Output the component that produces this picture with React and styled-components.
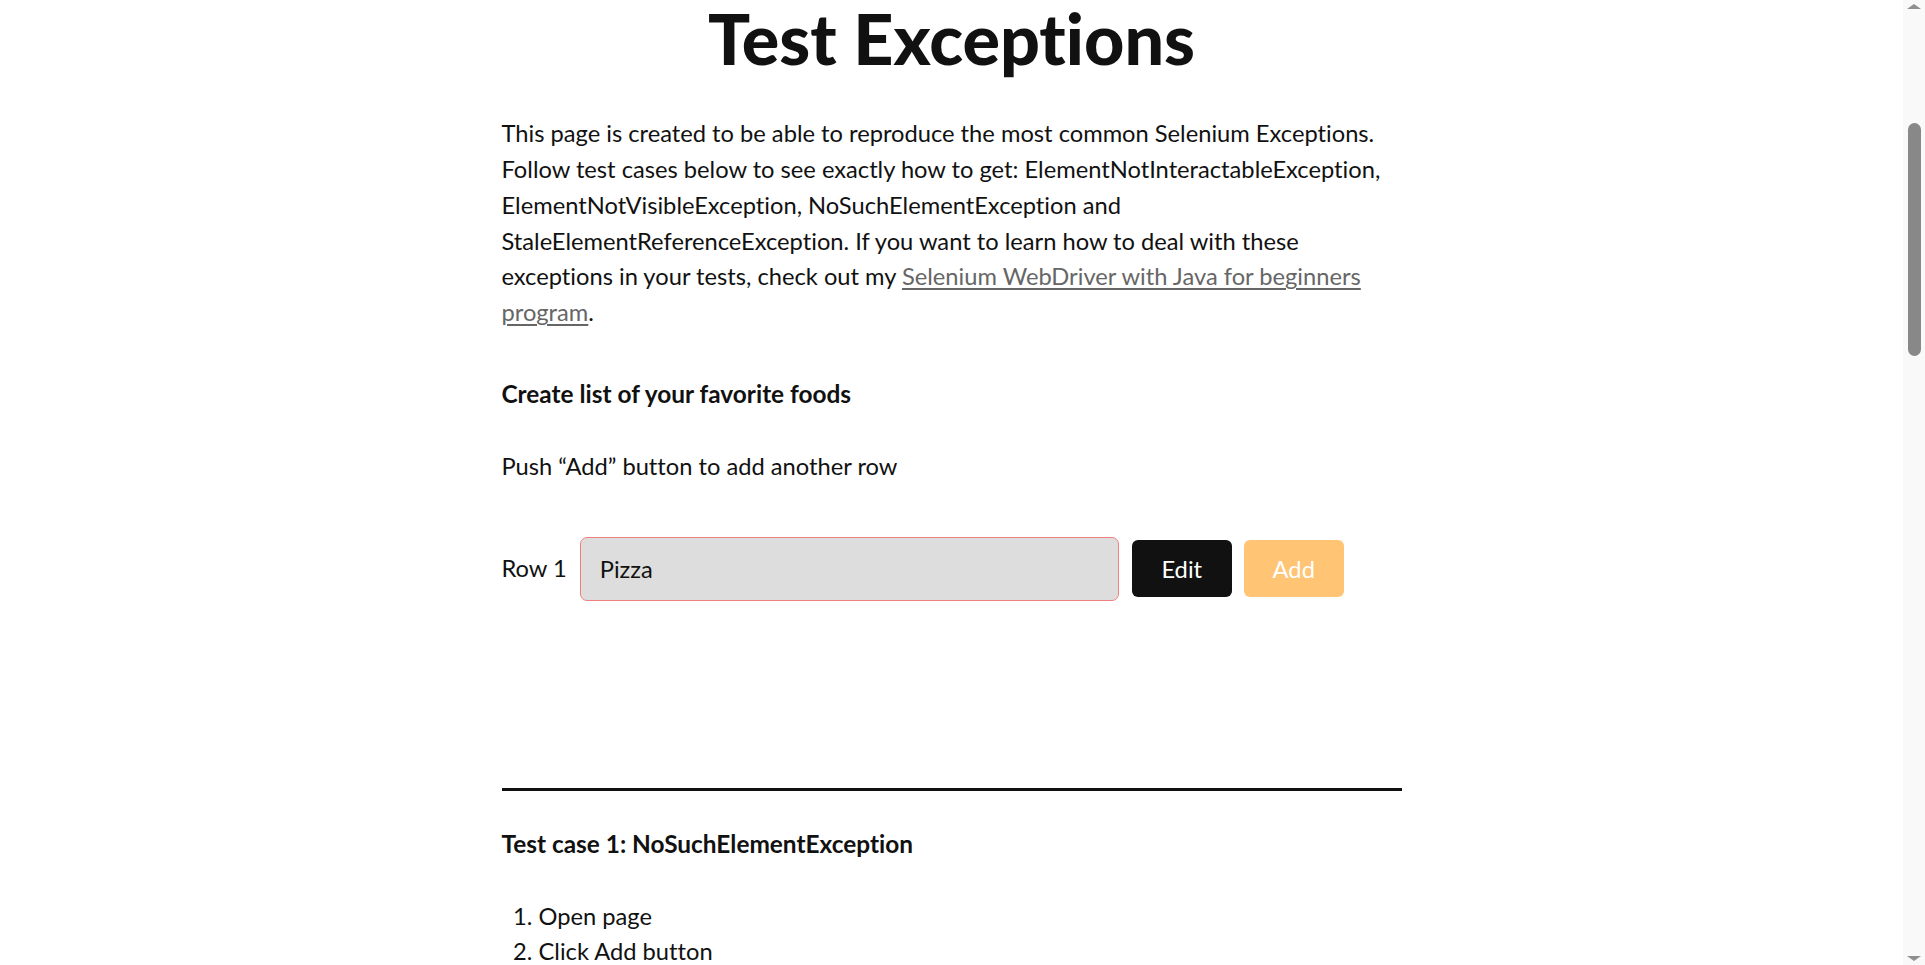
import React from "react";
import styled, { createGlobalStyle } from "styled-components";

const GlobalStyle = createGlobalStyle`
  html, body {
    margin: 0;
    padding: 0;
    background: #ffffff;
  }
  body {
    font-family: Lato, "Noto Sans", sans-serif;
    font-variant-ligatures: none;
    font-feature-settings: "liga" 0, "clig" 0, "dlig" 0;
    color: #111111;
    -webkit-font-smoothing: antialiased;
  }
  * { box-sizing: border-box; }
`;

const Page = styled.div`
  display: flex;
  justify-content: center;
  padding: 3px 22px 120px 0;
`;

const Content = styled.main`
  width: 900px;
  font-size: 23.7px;
  line-height: 35.84px;
`;

const Title = styled.h1`
  margin: 0 0 43px;
  font-size: 70px;
  line-height: 1;
  font-weight: 900;
  text-align: center;
`;

const Paragraph = styled.p`
  margin: ${(p) => p.$mt || 0}px 0 0;
`;

const Link = styled.a`
  color: #666666;
  text-decoration: underline;
  text-decoration-thickness: 2px;
  text-underline-offset: 3px;
`;

const Heading = styled.h3`
  margin: ${(p) => p.$mt || 0}px 0 0;
  font-size: 24.4px;
  line-height: 35.84px;
  font-weight: 700;
`;

const Row = styled.div`
  display: flex;
  align-items: center;
  margin-top: 52px;
`;

const RowLabel = styled.label`
  margin-right: 13px;
`;

const Input = styled.input`
  width: 539px;
  height: 64px;
  padding: 0 19px;
  border: 1px solid #f08080;
  border-radius: 7px;
  background: #dddddd;
  font-family: inherit;
  font-variant-ligatures: none;
  font-size: 23.7px;
  color: #111111;
  outline: none;
`;

const Button = styled.button`
  width: 100px;
  height: 57px;
  margin-left: ${(p) => p.$ml}px;
  border: none;
  border-radius: 6px;
  background: ${(p) => (p.$variant === "dark" ? "#111111" : "#ffc474")};
  color: #ffffff;
  font-family: inherit;
  font-variant-ligatures: none;
  font-size: 23.7px;
  cursor: pointer;
`;

const Rule = styled.hr`
  margin: 187px 0 0;
  border: none;
  height: 3px;
  background: #111111;
`;

const Steps = styled.ol`
  margin: 37px 0 0;
  padding-left: 37px;
`;

const Scrollbar = styled.div`
  position: fixed;
  top: 0;
  right: 0;
  width: 22px;
  height: 100vh;
  background: #f9f9f9;
`;

const Arrow = styled.span`
  position: absolute;
  left: 4px;
  ${(p) => (p.$dir === "up" ? "top: 4px;" : "bottom: 4px;")}
  width: 0;
  height: 0;
  border-left: 7px solid transparent;
  border-right: 7px solid transparent;
  ${(p) =>
    p.$dir === "up"
      ? "border-bottom: 5px solid #8f8f8f;"
      : "border-top: 5px solid #8f8f8f;"}
`;

const Thumb = styled.span`
  position: absolute;
  left: 5px;
  top: 123px;
  width: 13px;
  height: 233px;
  border-radius: 7px;
  background: #888888;
`;

const testCases = [
  {
    title: "Test case 1: NoSuchElementException",
    steps: ["Open page", "Click Add button", "Verify Row 2 input field is displayed"],
  },
  {
    title: "Test case 2: ElementNotInteractableException",
    steps: [
      "Open page",
      "Click Add button",
      "Wait for the second row to load",
      "Type text into the second input field",
      "Push Save button using locator By.name(“Save”)",
      "Verify text saved",
    ],
  },
  {
    title: "Test case 3: InvalidElementStateException",
    steps: ["Open page", "Clear input field", "Type text into the input field", "Verify text changed"],
  },
  {
    title: "Test case 4: StaleElementReferenceException",
    steps: [
      "Open page",
      "Find the instructions text element",
      "Push add button",
      "Verify instruction text element is no longer displayed",
    ],
  },
  {
    title: "Test case 5: TimeoutException",
    steps: [
      "Open page",
      "Click Add button",
      "Wait for 3 seconds for the second input field to be displayed",
      "Verify second input field is displayed",
    ],
  },
];

export default function App() {
  return (
    <>
      <GlobalStyle />
      <Page>
        <Content>
          <Title>Test Exceptions</Title>
          <Paragraph>
            This page is created to be able to reproduce the most common Selenium Exceptions. Follow test
            cases below to see exactly how to get: ElementNotInteractableException,
            ElementNotVisibleException, NoSuchElementException and StaleElementReferenceException. If you
            want to learn how to deal with these exceptions in your tests, check out my{" "}
            <Link href="#">Selenium WebDriver with Java for beginners program</Link>.
          </Paragraph>
          <Heading $mt={45}>Create list of your favorite foods</Heading>
          <Paragraph $mt={37}>Push “Add” button to add another row</Paragraph>
          <Row>
            <RowLabel>Row 1</RowLabel>
            <Input defaultValue="Pizza" disabled />
            <Button $variant="dark" $ml={13}>Edit</Button>
            <Button $variant="light" $ml={12}>Add</Button>
          </Row>
          <Rule />
          {testCases.map((tc, i) => (
            <section key={tc.title}>
              <Heading $mt={i === 0 ? 35 : 60}>{tc.title}</Heading>
              <Steps>
                {tc.steps.map((s) => (
                  <li key={s}>{s}</li>
                ))}
              </Steps>
            </section>
          ))}
        </Content>
      </Page>
      <Scrollbar aria-hidden="true">
        <Arrow $dir="up" />
        <Thumb />
        <Arrow $dir="down" />
      </Scrollbar>
    </>
  );
}
